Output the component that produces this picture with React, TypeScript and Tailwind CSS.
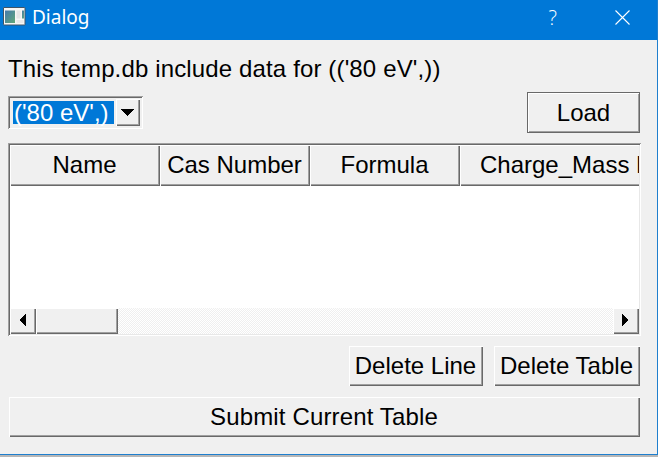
import type { ReactNode } from 'react';

const RAISED =
  'shadow-[inset_1px_1px_0_#fff,inset_-1px_-1px_0_#696969,inset_-2px_-2px_0_#a0a0a0]';

function PushButton({ children, className = '' }: { children: ReactNode; className?: string }) {
  return (
    <button
      type="button"
      className={`flex h-10 items-center justify-center whitespace-nowrap bg-[#f0f0f0] ${RAISED} ${className}`}
    >
      {children}
    </button>
  );
}

function Arrow({ points, width, height, className = '' }: { points: string; width: number; height: number; className?: string }) {
  return (
    <svg className={className} width={width} height={height} viewBox={`0 0 ${width} ${height}`} shapeRendering="crispEdges">
      <polygon points={points} fill="#000" />
    </svg>
  );
}

function WindowIcon() {
  return (
    <svg width="23" height="19" viewBox="0 0 23 19">
      <defs>
        <linearGradient id="pane" x1="0" y1="0" x2="1" y2="1">
          <stop offset="0" stopColor="#4479ad" />
          <stop offset="1" stopColor="#62a878" />
        </linearGradient>
      </defs>
      <rect x="0.5" y="0.5" width="21.5" height="17.5" rx="0.5" fill="#f7f7f5" stroke="#405466" />
      <rect x="2" y="3.5" width="10" height="12.5" fill="url(#pane)" />
      <rect x="13.5" y="3.5" width="4" height="8" fill="#e6e6e6" />
      <rect x="19" y="3.5" width="2" height="8" fill="url(#pane)" />
      <rect x="13.5" y="13" width="7" height="3" fill="#e9e9e9" />
    </svg>
  );
}

function TitleBar() {
  return (
    <header className="flex h-10 items-start bg-[#0078d7] pl-[3px] text-white">
      <div className="mt-[7px]">
        <WindowIcon />
      </div>
      <span className="ml-[6px] mt-[3px] font-['Noto_Sans','Open_Sans',sans-serif] text-[19px] leading-7">
        Dialog
      </span>
      <span className="ml-auto mr-[58px] mt-[4px] font-['Open_Sans','Noto_Sans',sans-serif] text-[20px] font-light leading-7">
        ?
      </span>
      <svg className="mr-[27px] mt-[10px]" width="15" height="15" viewBox="0 0 15 15">
        <path d="M0.5 0.5 14.5 14.5M14.5 0.5 0.5 14.5" stroke="#fff" strokeWidth="1.1" fill="none" />
      </svg>
    </header>
  );
}

function HeaderCell({ children, className = '' }: { children: ReactNode; className?: string }) {
  return (
    <div
      className={`flex h-[41px] w-[150px] shrink-0 items-center justify-center whitespace-nowrap bg-[#f0f0f0] pb-[2px] pr-px ${RAISED} ${className}`}
    >
      {children}
    </div>
  );
}

export default function App() {
  return (
    <div className="flex h-[457px] w-[658px] flex-col overflow-hidden bg-[#b7b7b7] font-['Liberation_Sans',Arial,sans-serif] text-[24px] leading-7 text-black">
      <div className="h-[455px] border-b border-r border-[#1f7fce] bg-[#f0f0f0]">
        <TitleBar />
        <main className="pl-2">
          <p className="h-[52px] whitespace-nowrap pt-[15px] tracking-[0.14px]">This temp.db include data for (('80 eV',))</p>
          <div className="flex h-[51px] w-[632px] items-start justify-between">
            <div className="mt-1 flex h-[33px] w-[135px] bg-[#f0f0f0] pl-[5px] pt-[5px] shadow-[inset_1px_1px_0_#a0a0a0,inset_-1px_-1px_0_#fff,inset_2px_2px_0_#696969]">
              <div className="h-[23px] w-[101px] whitespace-nowrap bg-[#0078d7] pl-px leading-[23px] text-white">
                ('80 eV',)
              </div>
              <div className={`-mt-[2px] ml-[2px] flex h-[27px] w-6 items-center justify-center bg-[#f0f0f0] pb-px pr-[2px] ${RAISED}`}>
                <Arrow width={13} height={7} points="0,0 13,0 6.5,7" />
              </div>
            </div>
            <button
              type="button"
              className="flex h-[41px] w-[113px] items-center justify-center bg-[#f0f0f0] shadow-[inset_1px_1px_0_#696969,inset_-1px_-1px_0_#696969,inset_2px_2px_0_#fff,inset_-2px_-2px_0_#a0a0a0]"
            >
              Load
            </button>
          </div>
          <section className="flex h-[193px] w-[633px] flex-col bg-white pb-[2px] pl-[2px] pr-[2px] pt-[2px] shadow-[inset_1px_1px_0_#a0a0a0,inset_-1px_-1px_0_#fff,inset_2px_2px_0_#696969,inset_-2px_-2px_0_#e8e8e8]">
            <div className="flex overflow-hidden">
              <HeaderCell>Name</HeaderCell>
              <HeaderCell>Cas Number</HeaderCell>
              <HeaderCell>Formula</HeaderCell>
              <HeaderCell className="w-[230px]! justify-start! pl-5">Charge_Mass Ratio</HeaderCell>
            </div>
            <div className="mt-auto flex h-[26px] bg-[repeating-conic-gradient(#efefef_0%_25%,#fff_0%_50%)] bg-[length:2px_2px]">
              <div className={`flex w-[26px] items-center justify-center bg-[#f0f0f0] pb-[2px] pr-[2px] ${RAISED}`}>
                <Arrow width={7} height={12} points="7,0 7,12 0,6" />
              </div>
              <div className={`w-[82px] bg-[#f0f0f0] ${RAISED}`} />
              <div className={`ml-auto flex w-[26px] items-center justify-center bg-[#f0f0f0] pb-[2px] pr-[2px] ${RAISED}`}>
                <Arrow width={7} height={12} points="0,0 0,12 7,6" />
              </div>
            </div>
          </section>
          <div className="mt-[10px] flex w-[632px] justify-end gap-[11px]">
            <PushButton className="w-[134px] pr-px">Delete Line</PushButton>
            <PushButton className="w-[146px] pr-px">Delete Table</PushButton>
          </div>
          <PushButton className="ml-px mt-[11px] w-[631px] pr-px tracking-[0.14px]">Submit Current Table</PushButton>
        </main>
      </div>
    </div>
  );
}
